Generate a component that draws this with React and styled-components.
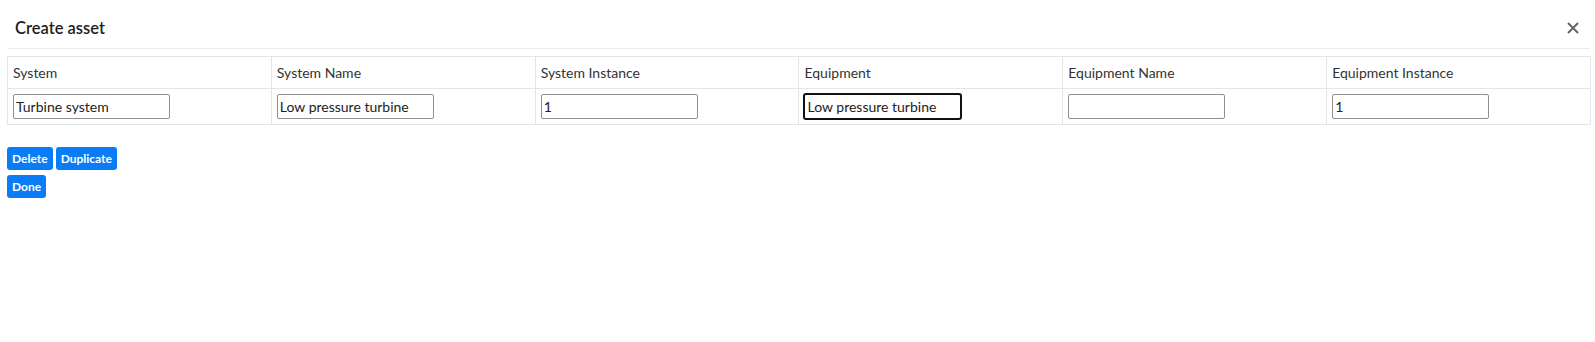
import React from "react";
import styled, { createGlobalStyle } from "styled-components";

const Global = createGlobalStyle`
  html, body { margin: 0; padding: 0; background: #fff; }
  body { font-family: Lato, "Open Sans", sans-serif; color: #333; }
`;

const Modal = styled.div`
  padding: 0 5px 0 7px;
`;

const Header = styled.div`
  box-sizing: border-box;
  display: flex;
  align-items: center;
  justify-content: space-between;
  height: 49px;
  border-bottom: 1px solid #e9ecef;
  padding: 7px 8px 0 8px;
`;

const Title = styled.h5`
  margin: 0;
  font-size: 16.5px;
  font-weight: 600;
  color: #1e1e1e;
`;

const Close = styled.button`
  border: 0;
  background: none;
  padding: 0;
  width: 14px;
  height: 14px;
  display: flex;
  cursor: pointer;
  margin-right: 2px;
`;

const Table = styled.table`
  margin-top: 7px;
  width: 1584px;
  border-collapse: collapse;
  table-layout: fixed;
`;

const Th = styled.th`
  border: 1px solid #e3e6e9;
  text-align: left;
  font-weight: 400;
  font-size: 14px;
  height: 31px;
  padding: 0 5px;
  color: #333;
`;

const Td = styled.td`
  border: 1px solid #e3e6e9;
  padding: 0 5px;
  height: 35px;
`;

const Input = styled.input`
  box-sizing: border-box;
  width: 157px;
  height: 25px;
  font-family: Lato, sans-serif;
  font-size: 14px;
  color: #222;
  padding: 1px 2px;
  border: 1px solid ${p => (p.$focused ? "#111" : "#8f8f8f")};
  box-shadow: ${p => (p.$focused ? "0 0 0 1px #111" : "none")};
  border-radius: 2px;
  outline: none;
  display: block;
`;

const Actions = styled.div`
  margin-top: 22px;
  display: flex;
  flex-direction: column;
  gap: 5px;
`;

const ButtonRow = styled.div`
  display: flex;
  gap: 3px;
`;

const Button = styled.button`
  background: #0a7cf5;
  color: #fff;
  border: 0;
  border-radius: 3px;
  font-family: Lato, sans-serif;
  font-weight: 700;
  font-size: 12px;
  height: 23px;
  padding: 0 5px;
  cursor: pointer;
`;

const columns = [
  { label: "System", value: "Turbine system" },
  { label: "System Name", value: "Low pressure turbine" },
  { label: "System Instance", value: "1" },
  { label: "Equipment", value: "Low pressure turbine", focused: true },
  { label: "Equipment Name", value: "" },
  { label: "Equipment Instance", value: "1" },
];

export default function App() {
  return (
    <>
      <Global />
      <Modal>
        <Header>
          <Title>Create asset</Title>
          <Close aria-label="Close">
            <svg width="14" height="14" viewBox="0 0 14 14">
              <path d="M2 2 L12 12 M12 2 L2 12" stroke="#666" strokeWidth="2" strokeLinecap="butt" />
            </svg>
          </Close>
        </Header>
        <Table>
          <thead>
            <tr>
              {columns.map(c => (
                <Th key={c.label}>{c.label}</Th>
              ))}
            </tr>
          </thead>
          <tbody>
            <tr>
              {columns.map(c => (
                <Td key={c.label}>
                  <Input defaultValue={c.value} $focused={c.focused} />
                </Td>
              ))}
            </tr>
          </tbody>
        </Table>
        <Actions>
          <ButtonRow>
            <Button>Delete</Button>
            <Button>Duplicate</Button>
          </ButtonRow>
          <ButtonRow>
            <Button>Done</Button>
          </ButtonRow>
        </Actions>
      </Modal>
    </>
  );
}
